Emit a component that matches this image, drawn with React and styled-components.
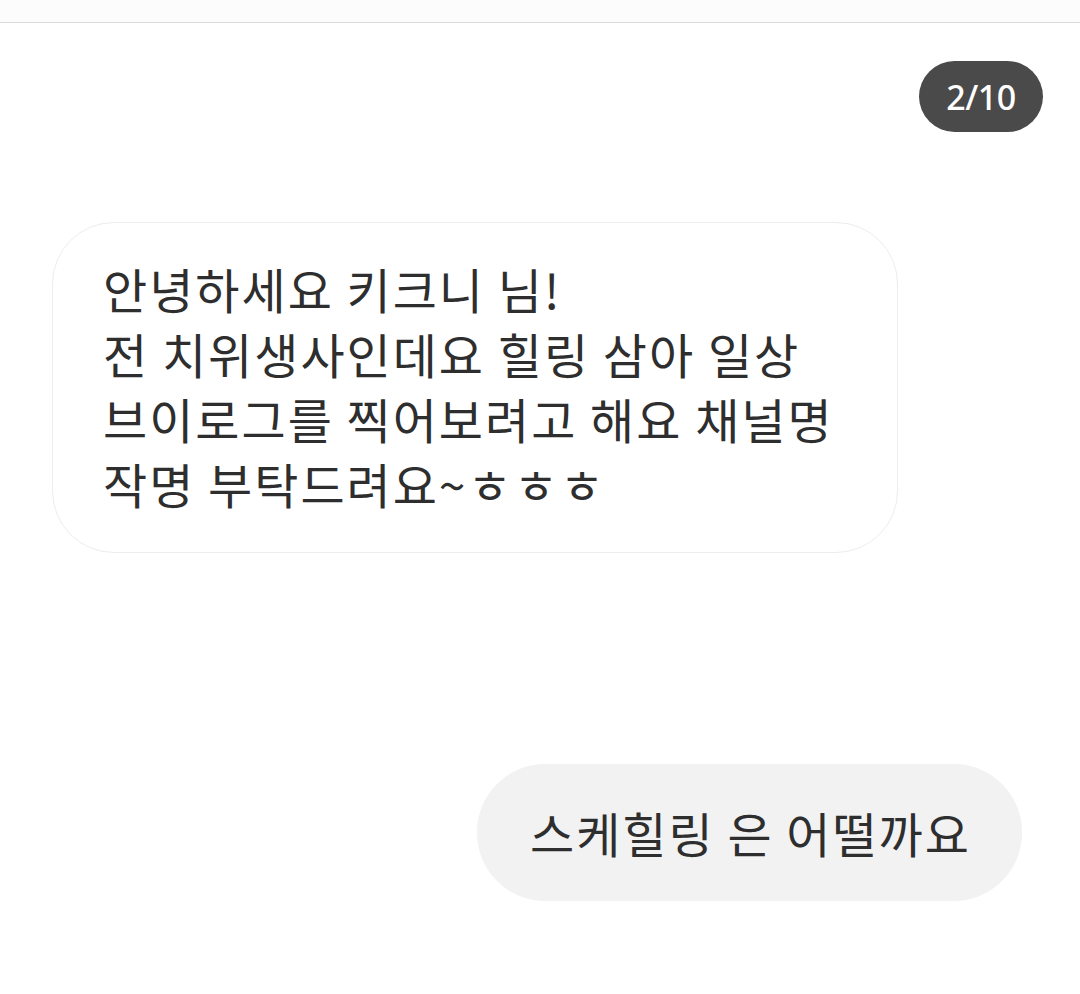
import React from "react";
import styled, { createGlobalStyle } from "styled-components";

const GlobalStyle = createGlobalStyle`
  html, body {
    margin: 0;
    padding: 0;
    background: #ffffff;
  }
  body {
    font-family: "Noto Sans CJK KR", "Noto Sans", sans-serif;
    color: #2e2e2e;
  }
`;

const Screen = styled.div`
  width: 1080px;
  height: 994px;
  overflow: hidden;
  display: flex;
  flex-direction: column;
  background: #ffffff;
`;

const TopBar = styled.div`
  height: 22px;
  background: #fcfcfc;
  border-bottom: 1px solid #d9d9d9;
  flex-shrink: 0;
`;

const CounterRow = styled.div`
  display: flex;
  justify-content: flex-end;
  padding: 38px 37px 0 0;
`;

const Counter = styled.div`
  width: 124px;
  height: 71px;
  border-radius: 36px;
  background: #4a4a4a;
  color: #ffffff;
  display: flex;
  align-items: center;
  justify-content: center;
  font-family: "Noto Sans", "Open Sans", sans-serif;
  font-size: 34px;
  font-weight: 500;
  letter-spacing: -0.5px;
`;

const MessageRow = styled.div`
  display: flex;
  justify-content: ${(p) => (p.$mine ? "flex-end" : "flex-start")};
  padding: ${(p) => (p.$mine ? "0 58px 0 0" : "0 0 0 52px")};
  margin-top: ${(p) => p.$gap}px;
`;

const Bubble = styled.div`
  box-sizing: border-box;
  background: ${(p) => (p.$mine ? "#f2f2f2" : "#ffffff")};
  border: 1px solid ${(p) => (p.$mine ? "#f2f2f2" : "#ededed")};
  border-radius: ${(p) => (p.$mine ? "68px" : "62px")};
  font-size: 48px;
  line-height: 65px;
  letter-spacing: 2px;
  color: #2e2e2e;
  white-space: pre-line;
`;

const InBubble = styled(Bubble)`
  width: 846px;
  height: 331px;
  padding: 33px 0 0 50px;
`;

const OutBubble = styled(Bubble)`
  width: 545px;
  height: 137px;
  display: flex;
  align-items: center;
  padding-left: 52px;
`;

export default function App() {
  return (
    <Screen>
      <GlobalStyle />
      <TopBar />
      <CounterRow>
        <Counter>2/10</Counter>
      </CounterRow>
      <MessageRow $gap={90}>
        <InBubble>
          {"안녕하세요 키크니 님!\n전 치위생사인데요 힐링 삼아 일상\n브이로그를 찍어보려고 해요 채널명\n작명 부탁드려요~ㅎㅎㅎ"}
        </InBubble>
      </MessageRow>
      <MessageRow $mine $gap={211}>
        <OutBubble $mine>스케힐링 은 어떨까요</OutBubble>
      </MessageRow>
    </Screen>
  );
}
